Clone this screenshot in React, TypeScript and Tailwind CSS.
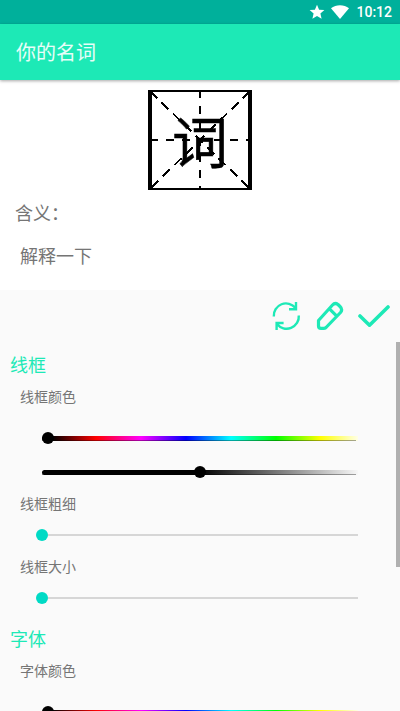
import React from 'react';

interface SliderProps {
  label: string;
}

const hueGradient =
  'bg-[linear-gradient(to_right,#000_10px,#f00_54px,#f0f_99px,#00f_144px,#0ff_189px,#0f0_234px,#ff0_278px,#fff_320px)]';
const shadeGradient = 'bg-[linear-gradient(to_right,#000_158px,#fafafa_318px)]';

function SectionTitle({ children }: { children: React.ReactNode }) {
  return <h2 className="h-[28px] pl-[10px] text-[18px] leading-[28px] text-[#1de9b6]">{children}</h2>;
}

function GradientTrack({ gradient, knob }: { gradient: string; knob: string }) {
  return (
    <div className="relative mx-[42px] h-[5px]">
      <div className={`h-full rounded-l-full ${gradient}`} />
      <div className="absolute bottom-0 left-0 h-px w-[314px] bg-black/35" />
      <div className={`absolute -top-[4px] size-3 rounded-full bg-black ${knob}`} />
    </div>
  );
}

function Slider({ label }: SliderProps) {
  return (
    <div className="h-[63px]">
      <div className="h-[20px] pl-5 text-[14px] leading-[20px] text-[#757575]">{label}</div>
      <div className="mx-[36px] mt-[16px] flex h-3 items-center">
        <span className="size-3 shrink-0 rounded-full bg-[#00dac5]" />
        <span className="mr-[6px] h-[2px] flex-1 bg-[#d6d6d6]" />
      </div>
    </div>
  );
}

function StatusBar() {
  return (
    <div className="flex h-6 items-center justify-end bg-[#00b09b] pr-2 text-white">
      <svg width="16" height="16" viewBox="0 0 16 16" fill="currentColor">
        <path d="M8 .8l2.1 4.900 5.300.4-4 3.500 1.200 5.200L8 12.100l-4.600 2.700 1.200-5.200-4-3.500 5.300-.4z" />
      </svg>
      <svg className="ml-[6px]" width="18" height="14" viewBox="0 0 18 14" fill="currentColor">
        <path d="M9 14L0 3.200C5 -.9 13-.9 18 3.200z" />
      </svg>
      <span className="ml-[7px] font-['Roboto',sans-serif] text-[14px] font-medium leading-6">10:12</span>
    </div>
  );
}

function CharacterGrid() {
  return (
    <div className="relative mx-auto h-[100px] w-[104px] bg-white">
      <svg className="absolute inset-0" width="104" height="100" viewBox="0 0 104 100" shapeRendering="crispEdges" fill="none" stroke="#000" strokeWidth="2">
        <path d="M2 0v100M102 0v100" strokeWidth="4" />
        <path d="M0 1h104M0 99h104" />
        <path d="M52 2v96M4 50h96" strokeDasharray="8 8" strokeDashoffset="2" />
        <path d="M2 1L102 99M102 1L2 99" strokeDasharray="10 6" />
      </svg>
      <span className="absolute left-[24px] top-[9px] text-[56px] leading-[80px] text-black [-webkit-text-stroke:0.5px_#000]">词</span>
    </div>
  );
}

function Toolbar() {
  return (
    <div className="flex h-[52px] items-center justify-end gap-[13px] pr-[10px] text-[#1de9b6]">
      <svg width="32" height="32" viewBox="0 0 32 32" fill="none" stroke="currentColor" strokeWidth="2.4">
        <path d="M2.800 16.500A12.200 12.200 0 0 1 24.500 8M25 2v7.300h-7M27.800 15.500A12.200 12.200 0 0 1 6 24M5.600 30v-7h7" />
      </svg>
      <svg width="29" height="32" viewBox="0 0 29 32" fill="none" stroke="currentColor" strokeWidth="3.2" strokeLinejoin="round">
        <path d="M2.500 20.500L16.500 5q2.500-2.800 5.500-.5l2 2q3 3 .5 6L10.500 27q-1 1.300-2.500 1.300H5Q2.500 28.300 2.500 26zM13.500 8.800l7 7" />
      </svg>
      <svg width="32" height="32" viewBox="0 0 32 32" fill="none" stroke="currentColor" strokeWidth="3.6" strokeLinecap="round" strokeLinejoin="round">
        <path d="M2 16l9.500 9.200L30 7" />
      </svg>
    </div>
  );
}

export default function App() {
  return (
    <div className="flex h-[711px] w-[400px] flex-col overflow-hidden bg-[#fafafa] font-['Noto_Sans_CJK_SC',sans-serif]">
      <StatusBar />
      <header className="z-10 flex h-14 shrink-0 items-center bg-[#1de9b6] pl-4 text-[20px] text-white/90 shadow-[0_1px_3px_rgba(0,0,0,0.35)]">
        你的名词
      </header>

      <section className="h-[210px] shrink-0 bg-white pt-[10px] text-[18px] leading-[26px] text-[#757575]">
        <CharacterGrid />
        <p className="mt-[9px] pl-[15px]">含义：</p>
        <p className="mt-[17px] pl-5">解释一下</p>
      </section>

      <Toolbar />

      <main className="relative h-[369px] overflow-hidden pt-[8px]">
        <div className="absolute right-0 top-0 h-[225px] w-1 bg-[#b0b0b0]" />
        <SectionTitle>线框</SectionTitle>
        <div className="mt-[8px] h-[20px] pl-5 text-[14px] leading-[20px] text-[#757575]">线框颜色</div>
        <div className="mt-[30px]">
          <GradientTrack gradient={hueGradient} knob="left-0" />
        </div>
        <div className="mb-[18px] mt-[29px]">
          <GradientTrack gradient={shadeGradient} knob="left-[152px]" />
        </div>
        <Slider label="线框粗细" />
        <Slider label="线框大小" />
        <div className="mt-[5px]">
          <SectionTitle>字体</SectionTitle>
        </div>
        <div className="mt-[8px] h-[20px] pl-5 text-[14px] leading-[20px] text-[#757575]">字体颜色</div>
        <div className="mt-[30px]">
          <GradientTrack gradient={hueGradient} knob="left-0" />
        </div>
      </main>
    </div>
  );
}
